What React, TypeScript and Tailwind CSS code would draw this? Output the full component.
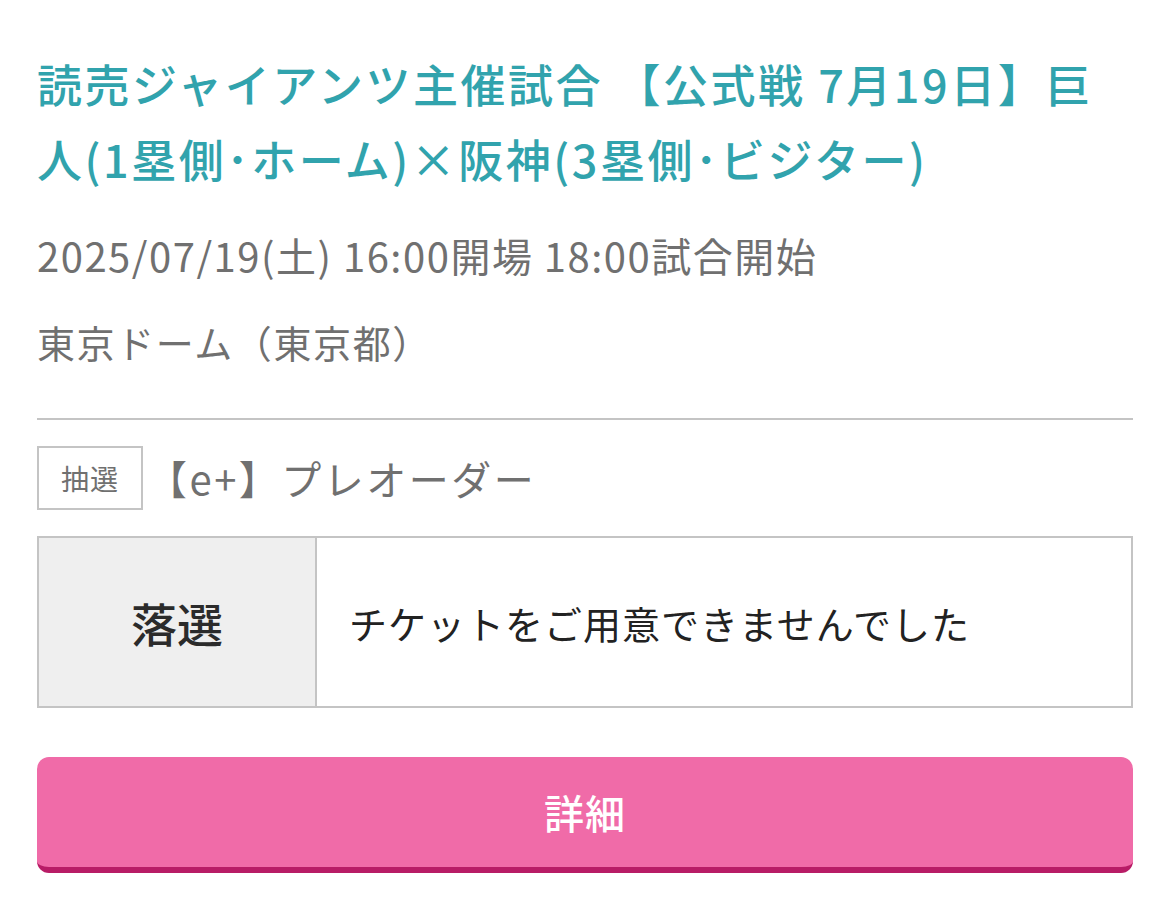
import React from 'react'

const font = { fontFamily: '"Noto Sans CJK JP", "Noto Sans", sans-serif' }

const App = () => {
  return (
    <div className="w-[1170px] h-[922px] bg-white" style={font}>
      <div className="px-[37px] pt-[46px]">
        <h1 className="text-[45px] leading-[75px] font-medium text-[#31a3ad] tracking-[2.5px]">
          読売ジャイアンツ主催試合 【公式戦 7月19日】巨人(1塁側･ホーム)×阪神(3塁側･ビジター)
        </h1>
        <p className="mt-[34px] text-[40px] leading-[50px] text-[#707070] tracking-[1.5px]">
          2025/07/19(土) 16:00開場 18:00試合開始
        </p>
        <p className="mt-[37px] text-[38px] leading-[50px] text-[#707070] tracking-[1.6px]">東京ドーム（東京都）</p>
        <div className="mt-[51px] h-[2px] bg-[#c4c4c4]" />
        <div className="mt-[26px] flex items-center gap-[4px]">
          <span className="w-[106px] h-[64px] flex items-center justify-center border-2 border-[#c4c4c4] text-[28px] text-[#707070] tracking-[1px]">
            抽選
          </span>
          <span className="text-[40px] text-[#707070] tracking-[2.5px]">【e+】プレオーダー</span>
        </div>
        <div className="mt-[26px] flex h-[172px] border-2 border-[#c4c4c4]">
          <div className="w-[278px] flex items-center justify-center bg-[#efefef] border-r-2 border-[#c4c4c4] text-[46px] font-medium text-[#2b2b2b]">
            落選
          </div>
          <div className="flex-1 flex items-center pl-[32px] text-[38px] text-[#222222] tracking-[1px]">
            チケットをご用意できませんでした
          </div>
        </div>
        <button className="mt-[49px] w-full h-[116px] rounded-[12px] bg-[#f06ba8] border-b-[6px] border-[#b81c66] text-white text-[40px] font-medium tracking-[1px] flex items-center justify-center">
          詳細
        </button>
      </div>
    </div>
  )
}

export default App
